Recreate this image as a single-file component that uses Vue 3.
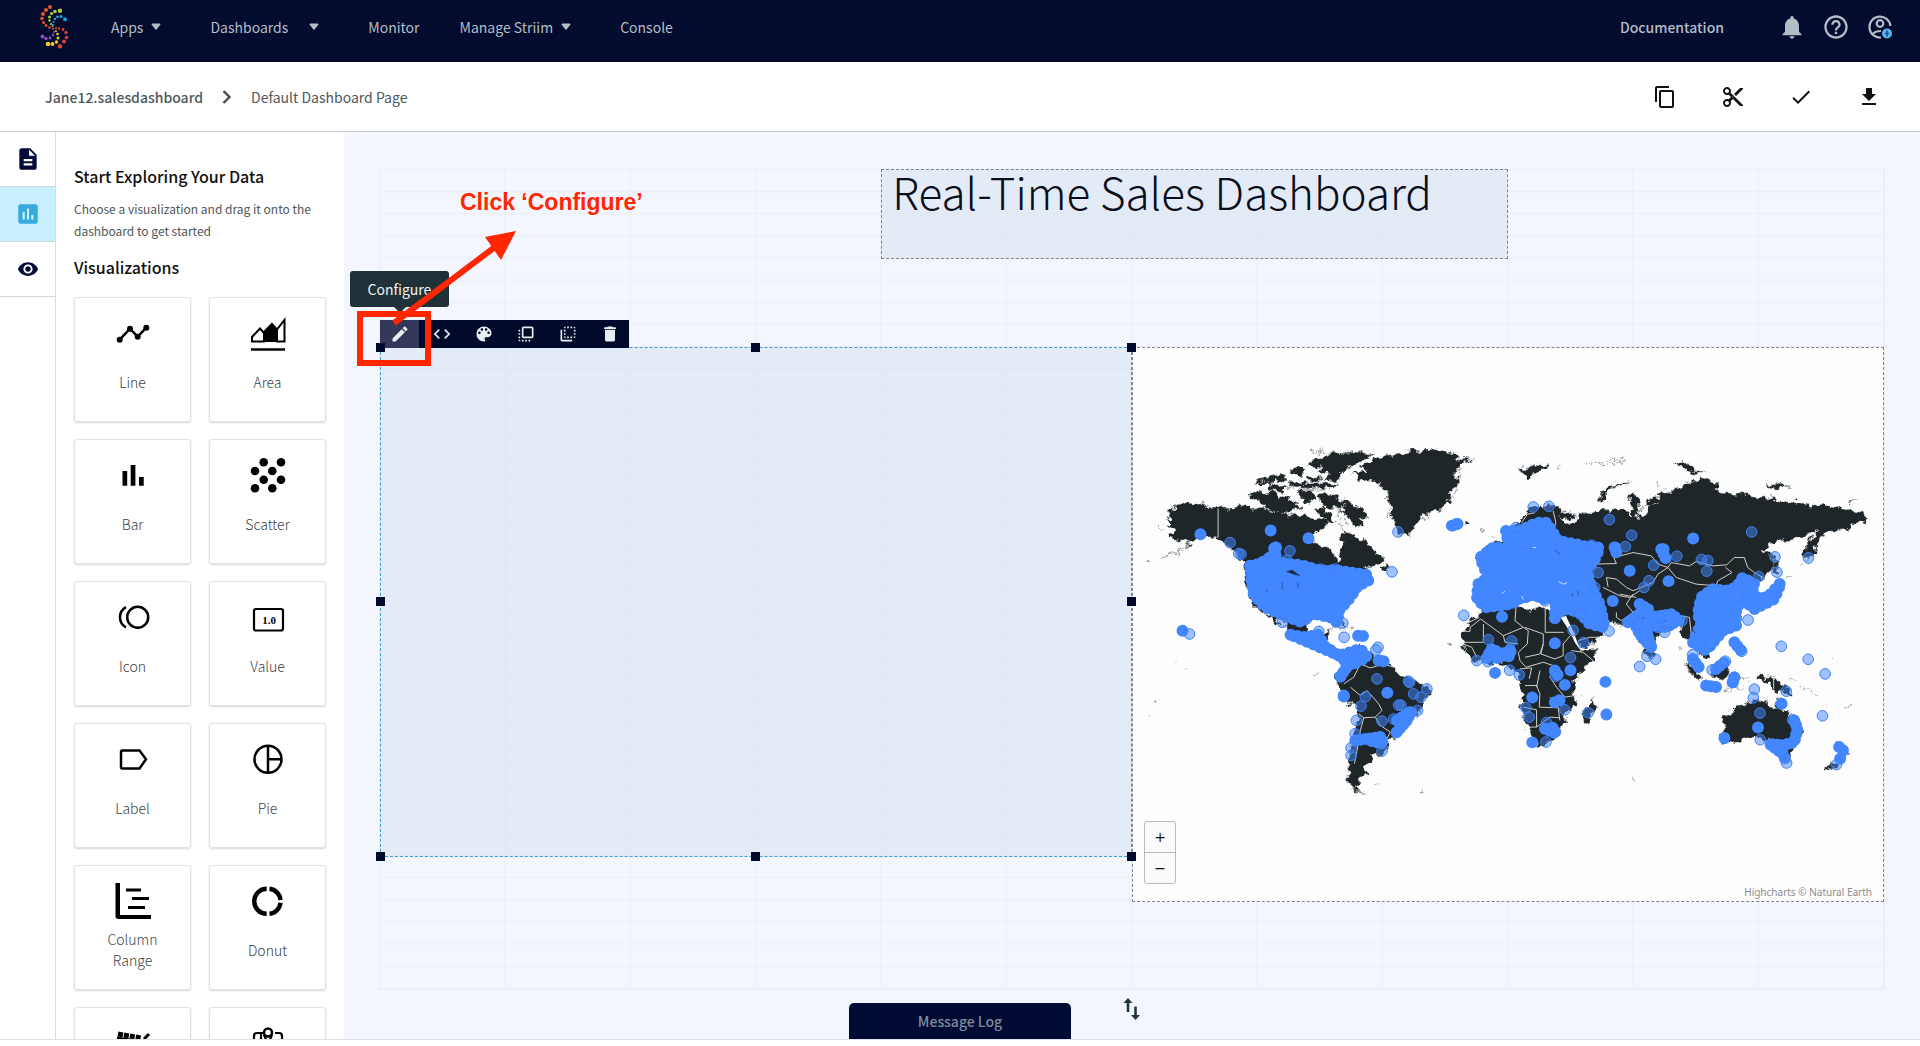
<script setup>
const logoDots = [
  ['#e8552d', [[50, 7, 2], [46, 10, 2], [43, 14, 2], [42, 18.5, 1.8], [43.5, 22.5, 1.6], [46, 25.5, 1.4], [49.5, 27.5, 1.2], [53, 28.5, 1]]],
  ['#a4d233', [[60, 10.7, 2.2], [55, 11.5, 1.8], [51.5, 13.5, 1.6], [49.5, 17, 1.5], [49.5, 20.5, 1.3], [51, 24, 1.1], [52.5, 26, 1]]],
  ['#1fa0dc', [[65, 19.3, 2], [61, 16.5, 1.6], [57.5, 16.8, 1.4], [55, 19, 1.3], [53.5, 22, 1.1], [52.8, 25, 1]]],
  ['#8e4fb8', [[42.5, 36.5, 2], [46, 38.5, 1.7], [50, 38, 1.4], [53, 35, 1.2], [54, 32, 1]]],
  ['#f6c926', [[48, 44, 2.3], [52.5, 44, 2], [56.5, 42, 1.7], [58, 38, 1.5], [57.5, 34, 1.3], [56, 31, 1]]],
  ['#d9442f', [[60, 46.3, 2.2], [64, 41.5, 2], [66.5, 37.5, 1.8], [66, 32.5, 1.7], [63, 29.5, 1.4], [59, 28.5, 1.2], [56, 28, 1]]],
]

const nav = [
  { label: 'Apps', menu: true },
  { label: 'Dashboards', menu: true, wide: true },
  { label: 'Monitor' },
  { label: 'Manage Striim', menu: true },
  { label: 'Console' },
]

const pageActions = [
  { label: 'Copy', d: 'M16 1H4c-1.1 0-2 .9-2 2v14h2V3h12V1zm3 4H8c-1.1 0-2 .9-2 2v14c0 1.1.9 2 2 2h11c1.1 0 2-.9 2-2V7c0-1.1-.9-2-2-2zm0 16H8V7h11v14z' },
  { label: 'Cut', d: 'M9.64 7.64c.23-.5.36-1.05.36-1.64 0-2.21-1.79-4-4-4S2 3.79 2 6s1.79 4 4 4c.59 0 1.14-.13 1.64-.36L10 12l-2.36 2.36C7.14 14.13 6.59 14 6 14c-2.21 0-4 1.79-4 4s1.79 4 4 4 4-1.79 4-4c0-.59-.13-1.14-.36-1.64L12 14l7 7h3v-1L9.64 7.64zM6 8c-1.1 0-2-.89-2-2s.9-2 2-2 2 .89 2 2-.9 2-2 2zm0 12c-1.1 0-2-.89-2-2s.9-2 2-2 2 .89 2 2-.9 2-2 2zm6-7.5c-.28 0-.5-.22-.5-.5s.22-.5.5-.5.5.22.5.5-.22.5-.5.5zM19 3l-6 6 2 2 7-7V3z' },
  { label: 'Validate', d: 'M9 16.17L4.83 12l-1.42 1.41L9 19 21 7l-1.41-1.41z' },
  { label: 'Download', d: 'M19 9h-4V3H9v6H5l7 7 7-7zM5 18v2h14v-2H5z' },
]

const rail = [
  { label: 'Pages', d: 'M14 2H6c-1.1 0-1.99.9-1.99 2L4 20c0 1.1.89 2 1.99 2H18c1.1 0 2-.9 2-2V8l-6-6zm2 16H8v-2h8v2zm0-4H8v-2h8v2zm-3-5V3.5L18.5 9H13z' },
  { label: 'Visualizations', active: true, d: 'M19 3H5c-1.1 0-2 .9-2 2v14c0 1.1.9 2 2 2h14c1.1 0 2-.9 2-2V5c0-1.1-.9-2-2-2zM9 17H7v-7h2v7zm4 0h-2V7h2v10zm4 0h-2v-4h2v4z' },
  { label: 'Preview', d: 'M12 4.5C7 4.5 2.73 7.61 1 12c1.73 4.39 6 7.5 11 7.5s9.27-3.11 11-7.5c-1.73-4.39-6-7.5-11-7.5zM12 17c-2.76 0-5-2.24-5-5s2.24-5 5-5 5 2.24 5 5-2.24 5-5 5zm0-8c-1.66 0-3 1.34-3 3s1.34 3 3 3 3-1.34 3-3-1.34-3-3-3z' },
]

const visualizations = [
  { icon: 'line', label: 'Line' },
  { icon: 'area', label: 'Area' },
  { icon: 'bar', label: 'Bar' },
  { icon: 'scatter', label: 'Scatter' },
  { icon: 'icon', label: 'Icon' },
  { icon: 'value', label: 'Value' },
  { icon: 'label', label: 'Label' },
  { icon: 'pie', label: 'Pie' },
  { icon: 'range', label: 'Column Range' },
  { icon: 'donut', label: 'Donut' },
  { icon: 'gauge' },
  { icon: 'map' },
]
const scatter = [[15.7, 7.3], [33, 7.3], [7, 16], [24.3, 16], [15.7, 24.7], [33, 24.7], [7, 33.3], [24.3, 33.3]]

const tools = [
  { label: 'Configure', active: true, d: 'M3 17.25V21h3.75L17.81 9.94l-3.75-3.75L3 17.25zM20.71 7.04c.39-.39.39-1.02 0-1.41l-2.34-2.34c-.39-.39-1.02-.39-1.41 0l-1.83 1.83 3.75 3.75 1.83-1.83z' },
  { label: 'Edit code', d: 'M9.4 16.6L4.8 12l4.6-4.6L8 6l-6 6 6 6 1.4-1.4zm5.2 0l4.6-4.6-4.6-4.6L16 6l6 6-6 6-1.4-1.4z' },
  { label: 'Style', d: 'M12 3c-4.97 0-9 4.03-9 9s4.03 9 9 9c.83 0 1.5-.67 1.5-1.5 0-.39-.15-.74-.39-1.01-.23-.26-.38-.61-.38-.99 0-.83.67-1.5 1.5-1.5H16c2.76 0 5-2.24 5-5 0-4.42-4.03-8-9-8zm-5.5 9c-.83 0-1.5-.67-1.5-1.5S5.67 9 6.5 9 8 9.67 8 10.5 7.33 12 6.5 12zm3-4C8.67 8 8 7.33 8 6.5S8.67 5 9.5 5s1.5.67 1.5 1.5S10.33 8 9.5 8zm5 0c-.83 0-1.5-.67-1.5-1.5S13.67 5 14.5 5s1.5.67 1.5 1.5S15.33 8 14.5 8zm3 4c-.83 0-1.5-.67-1.5-1.5S16.67 9 17.5 9s1.5.67 1.5 1.5-.67 1.5-1.5 1.5z' },
  { label: 'Bring to front', d: 'M3 13h2v-2H3v2zm0 4h2v-2H3v2zm2 4v-2H3c0 1.1.89 2 2 2zM3 9h2V7H3v2zm12 12h2v-2h-2v2zm4-18H9c-1.11 0-2 .9-2 2v10c0 1.1.89 2 2 2h10c1.1 0 2-.9 2-2V5c0-1.1-.9-2-2-2zm0 12H9V5h10v10zm-8 6h2v-2h-2v2zm-4 0h2v-2H7v2z' },
  { label: 'Send to back', d: 'M9 7H7v2h2V7zm0 4H7v2h2v-2zm0-8c-1.11 0-2 .9-2 2h2V3zm4 12h-2v2h2v-2zm6-12v2h2c0-1.1-.9-2-2-2zm-6 0h-2v2h2V3zM9 17v-2H7c0 1.1.89 2 2 2zm10-4h2v-2h-2v2zm0-4h2V7h-2v2zm0 8c1.1 0 2-.9 2-2h-2v2zM5 7H3v12c0 1.1.89 2 2 2h12v-2H5V7zm10-2h2V3h-2v2zm0 12h2v-2h-2v2z' },
  { label: 'Delete', d: 'M6 19c0 1.1.9 2 2 2h8c1.1 0 2-.9 2-2V7H6v12zM19 4h-3.5l-1-1h-5l-1 1H5v2h14V4z' },
]

const handles = ['nw', 'n', 'ne', 'w', 'e', 'sw', 's', 'se']

/* Western hemisphere */
const westLand = [
  'M103 268 120 262 108 240 135 232 128 225 165 213 190 220 215 218 262 232 300 235 318 226 345 222 360 235 400 232 425 245 455 240 475 255 520 250 550 268 585 258 600 270 590 285 570 292 548 318 552 335 590 350 612 362 622 392 632 388 628 362 638 345 630 322 640 300 668 310 688 328 700 320 722 352 748 372 765 385 735 405 700 412 720 430 700 455 670 490 640 530 630 545 645 585 625 580 600 560 560 560 530 575 535 600 560 610 590 600 590 630 610 660 640 690 600 675 560 640 520 635 480 610 465 580 430 550 455 590 435 580 415 552 390 540 360 510 348 470 345 430 340 395 310 365 285 335 262 322 235 318 200 322 170 345 140 360 88 383 130 365 165 345 180 332 150 330 130 325 118 310 130 300 112 290 122 280Z',
  'M355 200 370 178 400 185 430 180 445 198 470 192 490 215 512 228 490 242 450 245 415 240 392 215Z',
  'M370 155 400 138 450 130 470 145 440 150 420 165 390 160Z',
  'M410 165 445 160 470 168 455 182 420 178Z',
  'M475 152 500 148 515 158 560 152 625 162 610 174 550 172 480 170Z',
  'M525 105 550 85 575 80 600 68 660 62 735 68 700 85 670 100 640 125 620 150 580 145 595 128 560 125 580 108Z',
  'M560 195 600 186 640 205 680 225 710 245 712 262 690 262 702 290 685 292 660 270 640 240 610 235 580 225Z',
  'M500 180 540 178 555 195 530 225 515 200Z',
  'M545 240 575 228 600 250 612 275 590 270 568 250Z',
  'M475 118 505 112 525 122 515 140 490 130Z',
  'M535 135 575 140 560 150 530 148Z',
  'M665 125 712 118 690 105 740 80 790 70 850 58 910 55 960 62 985 80 1030 84 985 100 975 130 985 160 960 180 968 212 930 235 890 245 865 265 850 290 838 320 815 310 795 290 780 262 790 235 770 205 760 170 730 152 690 145Z',
  'M750 410 768 395 775 415 755 422Z',
  'M640 700 660 670 690 645 720 665 750 690 790 705 800 730 850 745 880 765 905 780 880 820 860 860 830 880 810 895 795 925 775 925 770 955 755 975 728 978 722 992 700 1010 705 1030 688 1045 692 1060 680 1070 700 1090 670 1080 655 1050 655 1000 660 950 670 900 685 860 680 830 650 815 630 780 615 750 612 730 630 715Z',
  'M1000 268 1015 275 1000 282Z',
]
const westLines = 'M262 232V320M640 760 670 740 690 700 720 712 760 700 790 710M660 770 690 795 710 780 745 820 755 840 735 860 700 862 685 850M735 860 750 885 780 905 770 925M700 862 690 900 680 960 672 1000'
const westCoast = 'M45 390 55 388M88 383 130 370 160 358M78 290 95 292M655 1000 650 1040 662 1075 710 1090M738 1064 752 1064M872 1083 884 1087M555 732 566 731M596 596 620 590 640 598M648 592 668 597M540 60 600 66 720 66M370 160 400 150 430 158M470 170 540 176 600 178M640 215 620 260 640 300M640 260 655 285M765 180 780 230 770 270M970 130 990 110 980 180 950 215M865 270 900 250M70 808 84 812M56 855 60 855M164 717 170 717M134 694 138 694M955 638 960 639'
const westClusters = [
  'M358 405 385 400 430 372 430 350 440 395 515 403 570 420 615 418 710 432 715 448 680 468 660 500 625 540 620 575 600 560 545 548 515 575 475 560 405 530 370 495 362 450Z',
  'M480 612 525 620 565 612 580 645 625 675 690 655 710 680 660 705 625 675 580 655Z',
]
const westTrails = 'M630 738 655 700M640 795 650 790M683 615 712 617M675 930 750 920 760 940 715 930M800 870 845 840 830 870 795 910M155 600 168 603M968 284 992 275M745 690 770 693M435 350 430 380'
const westSolid = [[209, 310], [420, 299], [534, 322], [771, 787], [436, 350], [640, 798], [630, 738]]
const westSoft = [[298, 335], [324, 368], [331, 370], [478, 360], [468, 388], [570, 415], [615, 415], [785, 423], [803, 303], [637, 577], [565, 602], [641, 620], [743, 650], [737, 658], [176, 610], [740, 745], [835, 752], [838, 756], [890, 775], [872, 800], [850, 790], [705, 799], [692, 827], [805, 824], [812, 824], [862, 840], [678, 870], [755, 872], [790, 866], [674, 910], [662, 952], [662, 975], [755, 962], [750, 690], [455, 575]]

/* Eastern hemisphere */
const eastLand = [
  'M200 330 190 300 215 285 240 275 260 240 300 225 340 222 370 240 410 252 405 265 360 258 380 278 410 272 425 245 440 252 460 243 490 238 530 232 565 242 580 260 575 235 565 205 585 190 600 205 600 235 590 262 612 255 628 245 620 222 630 200 665 200 648 185 690 182 745 155 765 152 785 140 835 155 830 180 880 190 915 188 950 202 1000 200 1010 210 1060 210 1110 222 1180 225 1220 232 1270 250 1292 266 1280 280 1245 270 1230 295 1180 300 1145 320 1130 345 1130 365 1105 385 1092 372 1095 350 1125 310 1140 300 1090 312 1060 328 1010 330 970 362 1000 372 1010 400 985 430 950 450 930 500 900 470 890 530 905 560 880 595 840 610 822 615 825 650 800 685 775 660 760 630 740 630 722 600 715 570 690 590 660 600 650 640 640 690 620 670 600 630 580 590 555 585 520 575 480 570 495 600 460 640 425 652 395 600 370 560 380 520 330 500 300 505 250 500 110 520 100 460 150 440 110 380 150 340Z',
  'M118 545 180 520 225 525 250 532 270 540 290 530 345 540 375 545 385 575 400 605 415 640 425 660 470 657 460 690 430 720 405 750 405 790 408 820 375 850 378 875 350 910 320 940 280 950 265 900 250 860 240 830 248 790 240 760 225 720 190 705 150 700 100 690 70 660 68 640 70 600 90 570Z',
  'M430 840 452 820 462 798 466 830 445 878 430 880 428 860Z',
  'M475 208 490 180 530 158 575 148 560 158 520 170 495 190 502 212Z',
  'M232 115 262 112 285 100 325 104 310 118 282 122 265 142 250 128Z',
  'M705 98 735 90 750 105 772 118 800 124 770 128 730 114Z',
  'M980 158 1000 162 1025 156 1030 166 1060 168 1010 172 990 168Z',
  'M1228 211 1250 212 1235 216Z',
  'M733 695 760 705 790 745 785 756 755 728Z',
  'M810 720 840 712 860 690 868 720 858 748 822 742Z',
  'M945 735 965 732 975 742 1005 744 1040 765 1060 798 1030 785 1000 775 985 760 960 748Z',
  'M845 860 880 845 905 822 935 815 950 802 980 806 985 828 1008 832 1020 800 1035 840 1070 870 1090 900 1075 940 1050 980 1020 965 1005 940 970 925 930 920 890 935 852 940 845 920 855 890Z',
  'M1195 935 1225 960 1215 990 1185 1010 1165 1024 1158 1015 1190 990 1205 960Z',
  'M1003 395 1018 400 1012 435 1003 430Z',
]
const eastLines = 'M68 602H90V590L122 565 190 615 250 590 225 570 228 530M130 580V635H70M85 575 118 560M190 615 195 635 235 640M255 590 310 610V640L300 670 255 680M316 530V605H372M250 590 265 600 262 640 235 665 240 690 258 710 310 695 340 705M310 640 303 670 345 685 370 675 370 640 400 605M395 660 430 665 460 690M255 765 290 765 300 790 298 830 355 832M340 705 330 740 350 770 375 800 405 795M290 770 300 720M250 830 290 838V890H270M290 890 330 860 360 862M330 800 355 832 360 870M145 660 140 690M165 665V700M190 660 185 700M240 715 275 712 268 745M70 640 95 650 110 680M455 400 530 398 522 380 580 365 635 375 655 400 685 410 695 395 750 405 770 392 820 405 862 402M685 410 710 440 770 460 830 465 835 450 878 425 858 410M862 402 885 380 915 380 925 410 945 425 970 440M500 440 530 445 560 470 580 480 640 455 655 430 685 410M490 470 540 495 570 500 600 480M530 545 530 560 545 570 580 545 560 520 580 490M500 440 505 468M600 540 640 545 720 555 750 560 755 610M735 560 725 600M245 275 262 250 285 245M340 240 348 275 340 300M348 355 365 380M415 630 450 620 480 620M1003 742V775M540 490 590 500'
const eastCoast = 'M435 98 455 97 480 95 510 86 545 84 555 92 530 94 505 102 480 98M120 300 128 304M156 316 162 320M355 104 365 104M600 238 610 230 660 215M735 695 765 740M855 780 920 775M895 740 930 745M985 735 1010 737M1050 742 1075 750M1080 765 1105 775 1130 792M1158 815 1166 828M1218 832 1236 826M574 1044 586 1045M718 650V662M1040 440 1062 433M1088 402 1110 385M70 640 90 660M424 795 427 798M1180 685 1184 686M965 683 968 685M24 638 30 639M740 145 736 155M655 155V168M750 590 775 605'
const eastClusters = [
  'M198 300 240 300 290 275 320 275 355 330 410 340 425 345 480 350 465 385 440 420 455 470 480 520 495 590 450 580 420 545 380 535 345 550 350 500 300 505 290 490 235 505 215 520 135 530 110 500 115 460 145 440 120 380 165 345 210 365Z',
  'M820 475 860 480 890 470 910 440 945 460 935 500 985 500 1025 455 1005 505 945 535 915 510 890 530 890 585 850 600 800 660 760 635 785 580 775 550 785 500Z',
]
const eastTrails = 'M600 520 625 535 630 560 700 550 715 570 680 590 615 580 635 650 600 610 580 565 610 540M665 355 680 385M525 350 530 365M565 575 600 555M140 682 155 655 205 680 215 655 160 690M885 635 905 660M760 685 785 720M830 715 855 695M800 765 835 770M880 755 885 740M345 720 355 735M315 895 350 910 330 880M345 815 370 805M1065 870 1075 895 1065 935 1030 945 990 940 1030 970 1040 990M1200 950 1212 960M1203 985 1205 990M500 852 508 848M35 284 62 275'
const eastSolid = [[761, 323], [570, 420], [687, 451], [519, 511], [186, 558], [345, 563], [345, 638], [392, 719], [375, 763], [277, 801], [277, 936], [497, 754], [165, 727], [855, 923], [956, 891], [1027, 820], [880, 755], [672, 355], [525, 350]]
const eastSoft = [[280, 228], [327, 226], [509, 266], [576, 313], [937, 303], [557, 347], [712, 376], [786, 386], [805, 389], [802, 421], [642, 403], [958, 437], [1007, 378], [1013, 424], [1108, 381], [926, 568], [1026, 647], [1107, 686], [1158, 730], [1150, 856], [1041, 782], [945, 776], [942, 802], [962, 848], [963, 928], [600, 708], [622, 677], [648, 686], [628, 450], [613, 470], [71, 554], [400, 599], [431, 636], [508, 601], [145, 627], [215, 631], [392, 681], [110, 690], [143, 693], [209, 719], [238, 733], [348, 737], [258, 832], [268, 860], [375, 838], [320, 876], [318, 935], [445, 847], [456, 343], [475, 425], [465, 470], [315, 510], [895, 498], [760, 672], [815, 640], [907, 662], [818, 718], [858, 692], [1060, 868], [1042, 998], [1192, 1003], [1030, 965], [595, 580], [655, 590], [727, 570], [885, 740], [675, 605], [228, 290], [420, 550]]
</script>

<template>
  <div class="app">
    <header class="topbar">
      <a href="#" class="logo" aria-label="Striim home">
        <svg width="32" height="50" viewBox="38 2 32 50">
          <g v-for="[color, dots] in logoDots" :key="color" :fill="color">
            <circle v-for="(c, i) in dots" :key="i" :cx="c[0]" :cy="c[1]" :r="c[2]" />
          </g>
        </svg>
      </a>
      <nav class="nav">
        <a v-for="item in nav" :key="item.label" href="#" :class="{ menu: item.menu, wide: item.wide }">
          {{ item.label }}
          <svg v-if="item.menu" width="10" height="8" viewBox="0 0 10 8"><path d="M0.5 1.5Q0.5 0.5 1.5 0.5H8.5Q9.5 0.5 9.5 1.5L5.8 6.3Q5 7.1 4.2 6.3Z" fill="currentColor" /></svg>
        </a>
      </nav>
      <a href="#" class="docs">Documentation</a>
      <div class="user-actions">
        <button type="button" aria-label="Notifications">
          <svg width="28" height="28" viewBox="0 0 24 24"><path fill="currentColor" d="M12 22c1.1 0 2-.9 2-2h-4c0 1.1.89 2 2 2zm6-6v-5c0-3.07-1.64-5.64-4.5-6.32V4c0-.83-.67-1.5-1.5-1.5s-1.5.67-1.5 1.5v.68C7.63 5.36 6 7.92 6 11v5l-2 2v1h16v-1l-2-2z" /></svg>
        </button>
        <button type="button" aria-label="Help">
          <svg width="28" height="28" viewBox="0 0 24 24"><path fill="currentColor" d="M11 18h2v-2h-2v2zm1-16C6.48 2 2 6.48 2 12s4.48 10 10 10 10-4.48 10-10S17.52 2 12 2zm0 18c-4.41 0-8-3.59-8-8s3.59-8 8-8 8 3.59 8 8-3.59 8-8 8zm0-14c-2.21 0-4 1.79-4 4h2c0-1.1.9-2 2-2s2 .9 2 2c0 2-3 1.75-3 5h2c0-2.25 3-2.5 3-5 0-2.21-1.79-4-4-4z" /></svg>
        </button>
        <button type="button" aria-label="Account">
          <svg width="28" height="28" viewBox="0 0 28 28" fill="none" stroke="currentColor" stroke-width="2.2">
            <path d="M24.4 13A10.5 10.5 0 1 0 15 24.5M6.5 21.5C8 19 11 18 15 18" />
            <circle cx="14" cy="10.5" r="3.3" />
            <circle cx="21" cy="20.5" r="5" fill="#5db4f5" stroke="none" />
            <path d="M21 17.5V23.5M18.8 20.5H23.2" stroke="#1a4f86" stroke-width="1.6" />
          </svg>
        </button>
      </div>
    </header>

    <div class="pagebar">
      <nav class="crumbs" aria-label="Breadcrumb">
        <a href="#" class="crumb-root">Jane12.salesdashboard</a>
        <svg width="10" height="16" viewBox="0 0 10 16"><path d="M1.5 2 7.5 8 1.5 14" fill="none" stroke="#444c4f" stroke-width="2.4" /></svg>
        <span>Default Dashboard Page</span>
      </nav>
      <div class="page-actions">
        <button v-for="a in pageActions" :key="a.label" type="button" :aria-label="a.label">
          <svg width="24" height="24" viewBox="0 0 24 24"><path :d="a.d" fill="currentColor" /></svg>
        </button>
      </div>
    </div>

    <div class="workspace">
      <nav class="rail" aria-label="Editor sections">
        <button v-for="r in rail" :key="r.label" type="button" :aria-label="r.label" :class="{ active: r.active }">
          <svg :width="r.label === 'Preview' ? 22 : 26" height="26" viewBox="0 0 24 24"><path :d="r.d" fill="currentColor" /></svg>
        </button>
      </nav>

      <aside class="panel">
        <h2>Start Exploring Your Data</h2>
        <p>Choose a visualization and drag it onto the dashboard to get started</p>
        <h2>Visualizations</h2>
        <div class="cards">
          <button v-for="v in visualizations" :key="v.icon" type="button" class="card" :aria-label="v.label || v.icon">
            <svg width="40" height="40" viewBox="0 0 40 40" fill="none" stroke="#000" stroke-width="2.5">
              <template v-if="v.icon === 'line'">
                <path d="M6.7 26.7 17 15.7 24.7 23.7 33.3 14.7" />
                <g fill="#000" stroke="none"><circle cx="6.7" cy="26.7" r="3" /><circle cx="17" cy="15.7" r="3" /><circle cx="24.7" cy="23.7" r="3" /><circle cx="33.3" cy="14.7" r="3" /></g>
              </template>
              <template v-else-if="v.icon === 'area'">
                <path d="M4 28.5V24L12 15.5 16 20V28.5ZM29 28.5V16.5L36.5 7V28.5Z" stroke-width="2" />
                <path d="M16 29V17.5L24 9.5 29.5 15.5V29Z" fill="#000" stroke="none" />
                <path d="M3 36.5H37" />
              </template>
              <path v-else-if="v.icon === 'bar'" d="M9.5 16h4.7v14.7H9.5ZM17.7 10h4.7v20.7h-4.7ZM26 22h4.7v8.7H26Z" fill="#000" stroke="none" />
              <g v-else-if="v.icon === 'scatter'" fill="#000" stroke="none">
                <circle v-for="(c, i) in scatter" :key="i" :cx="c[0]" :cy="c[1]" r="4.3" />
              </g>
              <template v-else-if="v.icon === 'icon'">
                <circle cx="24.7" cy="20.3" r="10.5" />
                <path d="M13 10.2A11.5 11.5 0 0 0 13 30.4" />
              </template>
              <template v-else-if="v.icon === 'value'">
                <rect x="6" y="12" width="29" height="21.5" rx="2" stroke-width="2.2" />
                <text x="21" y="26.5" class="value-glyph">1.0</text>
              </template>
              <path v-else-if="v.icon === 'label'" d="M8 13Q8 11.5 9.5 11.5H26.5L33 20.3 26.5 29.5H9.5Q8 29.5 8 28Z" />
              <path v-else-if="v.icon === 'pie'" d="M20 6.8A13.5 13.5 0 1 0 20 33.8A13.5 13.5 0 1 0 20 6.8V33.8M20 20.3H33.5" />
              <template v-else-if="v.icon === 'range'">
                <path d="M2.5 2H7V34H38V38H5.5Q2.5 38 2.5 35Z" fill="#000" stroke="none" />
                <path d="M13 9H28M19 17.5H36M15 26.5H32" stroke-width="3" />
              </template>
              <path v-else-if="v.icon === 'donut'" stroke-width="4.4" d="M18.7 7.8A12.5 12.5 0 0 0 18.7 32.8M21.5 32.8A12.5 12.5 0 0 0 32.5 21.7M32.5 18.9A12.5 12.5 0 0 0 21.5 7.8" />
              <template v-else-if="v.icon === 'gauge'">
                <path d="M5 11 28 15" stroke-width="5" stroke-dasharray="5 1" />
                <path d="M4 15 35 20M31 16 36 11" stroke-width="3" />
              </template>
              <template v-else>
                <path d="M16 10H9Q6 10 6 13V34H34V13Q34 10 31 10H27M20 21 16 12M20 21 24 12M13 11V18" stroke-width="2.2" />
                <circle cx="20" cy="9.5" r="4" fill="#fff" />
              </template>
            </svg>
            <span v-if="v.label">{{ v.label }}</span>
          </button>
        </div>
      </aside>

      <main class="canvas">
        <div class="grid">
          <section class="widget title-widget"><h1>Real-Time Sales Dashboard</h1></section>

          <section class="widget map-widget">
            <svg class="map" viewBox="0 0 2256 1662" role="img" aria-label="World sales map">
              <filter id="coastline" x="-2%" y="-2%" width="104%" height="104%" color-interpolation-filters="sRGB">
                <feTurbulence type="fractalNoise" baseFrequency="0.05" num-octaves="3" numOctaves="3" seed="4" result="noise" />
                <feDisplacementMap in="SourceGraphic" in2="noise" scale="30" xChannelSelector="R" yChannelSelector="G" />
              </filter>
              <g transform="translate(-6 249)">
                <g filter="url(#coastline)">
                  <path v-for="(d, i) in westLand" :key="i" :d="d" class="land" />
                  <path :d="westCoast" class="coast" />
                </g>
                <path :d="westLines" class="border" />
                <path v-for="(d, i) in westClusters" :key="'c' + i" :d="d" class="cluster" />
                <path :d="westTrails" class="trail" />
                <circle v-for="(c, i) in westSoft" :key="'s' + i" :cx="c[0]" :cy="c[1]" r="16" class="soft" />
                <circle v-for="(c, i) in westSolid" :key="'o' + i" :cx="c[0]" :cy="c[1]" r="18" class="solid" />
                <path d="M468 422 485 418 508 435 490 430ZM455 455v20M502 455v18M408 475v10" class="speck" />
              </g>
              <g transform="translate(924 249)">
                <g filter="url(#coastline)">
                  <path v-for="(d, i) in eastLand" :key="i" :d="d" class="land" />
                  <path :d="eastCoast" class="coast" />
                </g>
                <path d="M362 560 378 556 395 590 415 640 425 662 408 640 385 595Z" class="sea" />
                <path d="M446 508 460 515 470 545 480 560 462 545Z" class="sea" />
                <path :d="eastLines" class="border" />
                <path v-for="(d, i) in eastClusters" :key="'c' + i" :d="d" class="cluster" />
                <path :d="eastTrails" class="trail" />
                <circle v-for="(c, i) in eastSoft" :key="'s' + i" :cx="c[0]" :cy="c[1]" r="16" class="soft" />
                <circle v-for="(c, i) in eastSolid" :key="'o' + i" :cx="c[0]" :cy="c[1]" r="18" class="solid" />
                <path d="M355 452 370 460 382 456M278 350H288M245 496 250 506M185 488 195 482" class="glint" />
                <path d="M345 355 360 372M398 488v8M415 480v14M755 590l12 18" class="speck" />
              </g>
            </svg>
            <div class="zoom">
              <button type="button" aria-label="Zoom in">+</button>
              <button type="button" aria-label="Zoom out">−</button>
            </div>
            <a href="#" class="credits">Highcharts © Natural Earth</a>
          </section>

          <section class="widget selected" aria-label="Selected chart">
            <div class="tools" role="toolbar">
              <button v-for="t in tools" :key="t.label" type="button" :aria-label="t.label" :class="{ active: t.active }">
                <svg width="20" height="20" viewBox="0 0 24 24"><path :d="t.d" fill="currentColor" /></svg>
              </button>
              <div class="tooltip" role="tooltip">Configure</div>
              <svg class="callout" width="300" height="190" viewBox="0 0 300 190">
                <rect x="10" y="133" width="68" height="49" fill="none" stroke="#ff2600" stroke-width="6" />
                <path d="M44 142 145 66" stroke="#ff2600" stroke-width="6" />
                <path d="M166 50 135 56 151 79Z" fill="#ff2600" />
              </svg>
              <p class="callout-text">Click ‘Configure’</p>
            </div>
            <i v-for="h in handles" :key="h" class="handle" :class="h"></i>
          </section>
        </div>

        <button type="button" class="resize" aria-label="Resize canvas">
          <svg width="20" height="24" viewBox="0 0 20 24"><path d="M6 1 1.5 6H4.7V15H7.3V6H10.5ZM13.5 23 18 18H14.8V9.5H12.2V18H9Z" fill="#25363a" /></svg>
        </button>
        <button type="button" class="log">Message Log</button>
      </main>
    </div>
  </div>
</template>

<style>
body {
  margin: 0;
  background: #fff;
}
</style>

<style scoped>
.app {
  display: flex;
  flex-direction: column;
  box-sizing: border-box;
  height: 100vh;
  padding-bottom: 6px;
  overflow: hidden;
  color: #4e5759;
  font-family: "Noto Sans CJK SC", "Noto Sans", sans-serif;
  font-size: 14px;
}

.app *,
.app *::before {
  box-sizing: border-box;
}

button {
  padding: 0;
  border: 0;
  background: none;
  color: inherit;
  font: inherit;
  cursor: pointer;
}

a {
  color: inherit;
  text-decoration: none;
}

svg {
  display: block;
}

.topbar {
  display: flex;
  flex: none;
  align-items: center;
  height: 62px;
  padding: 0 26px 8px 38px;
  background: #030b2e;
  color: #b4bdc6;
}

.nav {
  display: flex;
  flex: 1;
  gap: 40px;
  margin-left: 41px;
}

.nav a {
  display: flex;
  gap: 8px;
  align-items: center;
}

.nav .menu {
  margin-right: 9px;
}

.nav .wide {
  gap: 21px;
}

.docs {
  font-weight: 500;
}

.user-actions {
  display: flex;
  gap: 16px;
  margin-left: 54px;
}

.pagebar {
  display: flex;
  flex: none;
  align-items: center;
  justify-content: space-between;
  height: 70px;
  padding: 0 39px 0 45px;
  border-bottom: 1px solid #c9cbce;
}

.crumbs {
  display: flex;
  gap: 19px;
  align-items: center;
}

.crumb-root {
  font-weight: 500;
}

.page-actions {
  display: flex;
  gap: 44px;
  color: #111;
}

.workspace {
  display: flex;
  flex: 1;
  min-height: 0;
  border-bottom: 1px solid #dfe1e6;
}

.rail {
  flex: none;
  width: 56px;
  border-right: 1px solid #d9dbde;
  color: #040b38;
}

.rail button {
  display: grid;
  place-items: center;
  width: 100%;
  height: 55px;
  border-bottom: 1px solid #d4d7da;
}

.rail .active {
  background: #c8effe;
  color: #36a9dd;
}

.panel {
  flex: none;
  width: 288px;
  padding: 30px 18px 0;
  overflow: hidden;
  background: #fff;
}

.panel h2 {
  margin: 0;
  color: #111;
  font-size: 16px;
  font-weight: 500;
  line-height: 28px;
}

.panel p {
  margin: 8px 0 11px;
  font-size: 12px;
  line-height: 22px;
}

.cards {
  display: grid;
  grid-template-columns: 117px 117px;
  gap: 17px 18px;
  margin-top: 16px;
}

.card {
  display: flex;
  flex-direction: column;
  gap: 8px;
  align-items: center;
  height: 125px;
  padding: 15px 20px 0;
  border: 1px solid #dfe3e3;
  border-radius: 3px;
  background: #fff;
  box-shadow: 0 1px 2px #d5dada;
  color: #3c4148;
  font-weight: 300;
  line-height: 21px;
}

.card span {
  display: flex;
  align-items: center;
  min-height: 42px;
}

.value-glyph {
  fill: #000;
  stroke: none;
  font: bold 11px "Liberation Serif", serif;
  text-anchor: middle;
}

.canvas {
  position: relative;
  display: flex;
  flex: 1;
  flex-direction: column;
  min-width: 0;
  padding: 37px 35px 0;
  background: #f4f6fe;
}

.grid {
  display: grid;
  flex: 1;
  grid-template-rows: repeat(37, minmax(0, 1fr));
  grid-template-columns: repeat(12, minmax(0, 1fr));
  min-height: 0;
  border: 1px solid #ebedf2;
  background-image: linear-gradient(to left, #eceef4 1px, transparent 1px), linear-gradient(to top, #eceef4 1px, transparent 1px);
  background-size: calc(100% / 12) calc(100% / 37);
}

.widget {
  position: relative;
  border: 1px dashed #82858f;
}

.title-widget {
  grid-area: 1 / 5 / span 4 / span 5;
  margin-top: -1px;
  padding-left: 10px;
  background: #d2e0ee80;
}

.title-widget h1 {
  margin: 0;
  color: #0a0d1c;
  font-size: 44px;
  font-weight: 200;
  line-height: 42px;
  white-space: nowrap;
}

.map-widget {
  grid-area: 9 / 7 / span 25 / span 6;
  margin-bottom: -2px;
  background: #fdfdfe;
}

.map {
  width: 100%;
  height: 100%;
}

.land {
  fill: #1e2629;
  stroke: #a9abaa;
  stroke-width: 2;
}

.sea {
  fill: #fdfdfe;
}

.border {
  fill: none;
  stroke: #cfcfc6;
  stroke-width: 3;
}

.coast {
  fill: none;
  stroke: #a3a5a5;
  stroke-width: 4;
  stroke-dasharray: 9 4;
}

.cluster {
  fill: #4287ff;
  stroke: #4287ff;
  stroke-width: 36;
  stroke-linecap: round;
  stroke-linejoin: round;
  stroke-dasharray: 0 21;
}

.trail {
  fill: none;
  stroke: #4287ff;
  stroke-width: 36;
  stroke-linecap: round;
  stroke-linejoin: round;
  stroke-dasharray: 0 15;
}

.soft {
  fill: #4287ff80;
  stroke: #3f7fee;
  stroke-width: 3;
}

.solid {
  fill: #4287ff;
}

.speck {
  fill: #1e2629;
  stroke: #1e3f7a;
  stroke-width: 2;
}

.glint {
  fill: none;
  stroke: #c9dcff;
  stroke-width: 3;
}

.zoom {
  position: absolute;
  bottom: 17px;
  left: 11px;
  width: 32px;
  border: 1px solid #b9bbbb;
  border-radius: 3px;
  background: #fafafa;
}

.zoom button {
  display: block;
  width: 30px;
  height: 30px;
  color: #111;
  font-family: "DejaVu Sans", sans-serif;
  font-size: 14px;
  line-height: 30px;
}

.zoom button + button {
  height: 31px;
  border-top: 1px solid #b9bbbb;
}

.credits {
  position: absolute;
  right: 11px;
  bottom: 2px;
  color: #8c8c8c;
  font-family: "Noto Sans", sans-serif;
  font-size: 10px;
  line-height: 14px;
}

.selected {
  grid-area: 9 / 1 / span 23 / span 6;
  margin-bottom: -1px;
  border-color: #3f9ed8;
  background: #d2e0ee80;
}

.tools {
  position: absolute;
  bottom: 100%;
  left: -1px;
  display: flex;
  gap: 3px;
  background: #020a2c;
  color: #e6eef2;
}

.tools button {
  display: grid;
  place-items: center;
  width: 39px;
  height: 28px;
}

.tools .active {
  background: #33375a;
}

.tooltip {
  position: absolute;
  bottom: 41px;
  left: -30px;
  width: 99px;
  border-radius: 3px;
  background: #203237;
  color: #f2f5f5;
  line-height: 36px;
  text-align: center;
}

.tooltip::before {
  position: absolute;
  top: 100%;
  left: 44px;
  border: 6px solid transparent;
  border-top-color: #203237;
  content: "";
}

.callout {
  position: absolute;
  top: -139px;
  left: -30px;
  pointer-events: none;
}

.callout-text {
  position: absolute;
  bottom: 132px;
  left: 80px;
  margin: 0;
  color: #ff2600;
  font: bold 23px/28px "Liberation Sans", sans-serif;
  white-space: nowrap;
}

.handle {
  position: absolute;
  width: 9px;
  height: 9px;
  background: #020a2c;
}

.nw, .n, .ne { top: -5px; }
.w, .e { top: calc(50% - 5px); }
.sw, .s, .se { bottom: -5px; }
.nw, .w, .sw { left: -5px; }
.n, .s { left: calc(50% - 5px); }
.ne, .e, .se { right: -5px; }

.resize {
  align-self: center;
  height: 24px;
  margin: 7px 0 18px;
}

.log {
  position: absolute;
  bottom: 0;
  left: calc(50% - 283px);
  width: 222px;
  height: 36px;
  border-radius: 5px 5px 0 0;
  background: #000b33;
  color: #7f8a9d;
  font-weight: 500;
}
</style>
